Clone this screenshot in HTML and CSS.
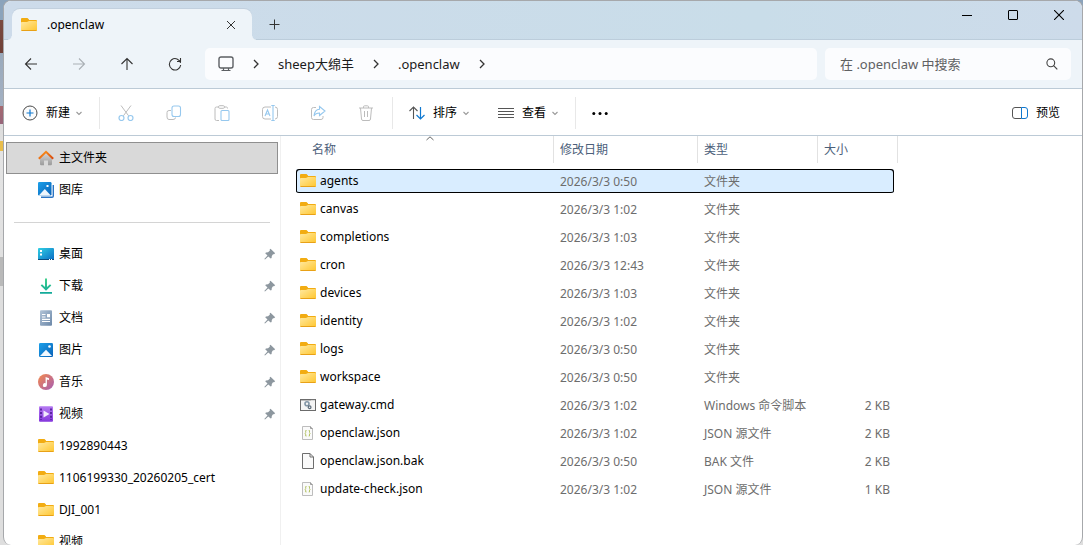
FILE: index.html
```html
<!DOCTYPE html>
<html lang="zh-CN">
<head>
    <meta charset="UTF-8">
    <meta name="viewport" content="width=device-width, initial-scale=1.0">
    <title>.openclaw</title>
    <link rel="stylesheet" href="styles.css">
</head>
<body>
    <!-- shared icons -->
    <svg class="sprite" width="0" height="0">
        <defs>
            <linearGradient id="gFolder" x1="0" y1="0" x2="1" y2="1">
                <stop offset="0" stop-color="#ffe9a0"/>
                <stop offset="1" stop-color="#ffc62e"/>
            </linearGradient>
            <linearGradient id="gHome" x1="0" y1="0" x2="0" y2="1">
                <stop offset="0" stop-color="#d8d8d8"/>
                <stop offset="1" stop-color="#9a9a9a"/>
            </linearGradient>
            <linearGradient id="gRoof" x1="0" y1="0" x2="1" y2="1">
                <stop offset="0" stop-color="#ff9a1c"/>
                <stop offset="1" stop-color="#d8480e"/>
            </linearGradient>
            <linearGradient id="gBlue" x1="0" y1="0" x2="1" y2="1">
                <stop offset="0" stop-color="#1ba0ea"/>
                <stop offset="1" stop-color="#0a62b8"/>
            </linearGradient>
            <linearGradient id="gDesk" x1="0" y1="0" x2="1" y2="1">
                <stop offset="0" stop-color="#30d0e4"/>
                <stop offset="1" stop-color="#0b6cc4"/>
            </linearGradient>
            <linearGradient id="gDoc" x1="0" y1="0" x2="1" y2="1">
                <stop offset="0" stop-color="#b2c4d8"/>
                <stop offset="1" stop-color="#6b87a8"/>
            </linearGradient>
            <linearGradient id="gDown" x1="0" y1="0" x2="0" y2="1">
                <stop offset="0" stop-color="#3fd08c"/>
                <stop offset="1" stop-color="#10a89a"/>
            </linearGradient>
            <linearGradient id="gMusic" x1="0" y1="0" x2="1" y2="1">
                <stop offset="0" stop-color="#f58a4c"/>
                <stop offset="1" stop-color="#a55cb4"/>
            </linearGradient>
            <linearGradient id="gVideo" x1="0" y1="0" x2="0" y2="1">
                <stop offset="0" stop-color="#b57af2"/>
                <stop offset="1" stop-color="#8436dc"/>
            </linearGradient>
        </defs>
        <symbol id="folder" viewBox="0 0 16 16">
            <path d="M0 2Q0 1 1 1H6.5L8 2.5V3H15Q16 3 16 4V8H0Z" fill="#f2ac12"/>
            <path d="M0 5.5Q0 5 1 5H6L8 4H15Q16 4 16 5V13Q16 14 15 14H1Q0 14 0 13Z" fill="url(#gFolder)"/>
            <path d="M0.5 13.5H15.5" stroke="#e8a117" stroke-width="1"/>
        </symbol>
        <symbol id="pin" viewBox="0 0 12 12">
            <path d="M6.5 0.8L11.2 5.2L10 6.2L9 6.2L7.8 8L7.6 10L6.7 10.6L4.3 8.4L1 11.6L0.3 11L3.5 7.6L1.2 5.3L2 4.4L4 4.2L5.8 2.8L5.7 1.6Z" fill="#8d979f"/>
        </symbol>
        <symbol id="down" viewBox="0 0 8 8">
            <path d="M1.5 3L4 5.5L6.5 3" fill="none" stroke="#999" stroke-width="1.1"/>
        </symbol>
        <symbol id="right" viewBox="0 0 8 12">
            <path d="M2 2L6 6L2 10" fill="none" stroke="#333" stroke-width="1.3"/>
        </symbol>
        <symbol id="json" viewBox="0 0 16 16">
            <path d="M2.5 1.5H10.5L12.5 3.5V14.5H2.5Z" fill="#fafafa" stroke="#bdbdbd"/>
            <path d="M10.5 1.5V3.5H12.5" fill="none" stroke="#9a9a9a"/>
            <path d="M6.5 5.5H5.7V7.5L5 8.2L5.7 9V11H6.5M8.7 5.5H9.5V7.5L10.2 8.2L9.5 9V11H8.7" fill="none" stroke="#b5c46a"/>
        </symbol>
        <symbol id="file" viewBox="0 0 16 16">
            <path d="M2.5 0.5H10L13.5 4V15.5H2.5Z" fill="#fafafa" stroke="#6e6e6e"/>
            <path d="M10 0.5V4H13.5" fill="none" stroke="#6e6e6e"/>
        </symbol>
        <symbol id="cmd" viewBox="0 0 16 16">
            <rect x="0.5" y="2.5" width="15" height="11" fill="#f4f4f4" stroke="#6b6b6b"/>
            <path d="M1 3.5H11" stroke="#bbb"/>
            <path d="M11.5 3H15" stroke="#888" stroke-dasharray="1 1"/>
            <circle cx="7" cy="6.8" r="2" fill="none" stroke="#8295a5" stroke-width="1.6"/>
            <circle cx="9.6" cy="10.2" r="1.4" fill="none" stroke="#5b6b79" stroke-width="1.2"/>
        </symbol>
    </svg>

    <div class="window">
        <header class="titlebar">
            <div class="tab">
                <svg class="icon"><use href="#folder"/></svg>
                <span class="tab-title">.openclaw</span>
                <button class="tab-close" aria-label="关闭标签页">
                    <svg width="10" height="10"><path d="M1 1L9 9M9 1L1 9" stroke="#333"/></svg>
                </button>
            </div>
            <button class="tab-add" aria-label="新标签页">
                <svg width="11" height="11"><path d="M5.5 0.5V10.5M0.5 5.5H10.5" stroke="#333"/></svg>
            </button>
            <div class="controls">
                <button aria-label="最小化"><svg width="10" height="10"><path d="M0 5.5H10" stroke="#000"/></svg></button>
                <button aria-label="最大化"><svg width="10" height="10"><rect x="0.5" y="0.5" width="9" height="9" rx="0.5" fill="none" stroke="#000"/></svg></button>
                <button aria-label="关闭"><svg width="10" height="10"><path d="M0 0L10 10M10 0L0 10" stroke="#000" stroke-width="1.1"/></svg></button>
            </div>
        </header>

        <nav class="navbar">
            <div class="nav-buttons">
                <button aria-label="后退"><svg width="14" height="14"><path d="M13 7H1.5M7 1.5L1.5 7L7 12.5" fill="none" stroke="#333" stroke-width="1.1"/></svg></button>
                <button aria-label="前进" disabled><svg width="14" height="14"><path d="M1 7H12.5M7 1.5L12.5 7L7 12.5" fill="none" stroke="#aab0b5" stroke-width="1.1"/></svg></button>
                <button aria-label="上移"><svg width="14" height="14"><path d="M7 13V1.5M1.5 7L7 1.5L12.5 7" fill="none" stroke="#333" stroke-width="1.1"/></svg></button>
                <button aria-label="刷新"><svg width="14" height="14"><path d="M12.6 6A5.7 5.7 0 1 0 12.7 8M12.5 1V4.5H9" fill="none" stroke="#333" stroke-width="1.1"/></svg></button>
            </div>
            <div class="address">
                <svg class="icon monitor" viewBox="0 0 16 16"><rect x="1" y="1" width="14" height="11" rx="2" fill="none" stroke="#5c5f63" stroke-width="1.4"/><path d="M5.5 12V14.5M10.5 12V14.5M3.5 14.5H12.5" fill="none" stroke="#5c5f63" stroke-width="1.2"/></svg>
                <svg class="sep"><use href="#right"/></svg>
                <a href="#">sheep大绵羊</a>
                <svg class="sep"><use href="#right"/></svg>
                <a href="#">.openclaw</a>
                <svg class="sep"><use href="#right"/></svg>
            </div>
            <label class="search">
                <input type="text" placeholder="在 .openclaw 中搜索" aria-label="搜索">
                <svg width="12" height="12"><circle cx="4.8" cy="4.8" r="3.9" fill="none" stroke="#444" stroke-width="1.1"/><path d="M7.6 7.6L11.3 11.3" stroke="#444" stroke-width="1.2"/></svg>
            </label>
        </nav>

        <div class="toolbar">
            <button class="tool new">
                <svg class="icon" viewBox="0 0 16 16"><circle cx="8" cy="8" r="7" fill="#fbfbfb" stroke="#4a4a4a"/><path d="M8 4.5V11.5M4.5 8H11.5" stroke="#0f78d0" stroke-width="1.2"/></svg>
                新建
                <svg class="caret"><use href="#down"/></svg>
            </button>
            <span class="divider"></span>
            <div class="actions">
                <button disabled aria-label="剪切"><svg class="icon" viewBox="0 0 16 16" fill="none"><path d="M3 0.5L10.6 10.8M13 0.5L5.4 10.8" stroke="#bcbcbc"/><circle cx="3.5" cy="13" r="2.5" stroke="#96c8ee" stroke-width="1.2"/><circle cx="12.5" cy="13" r="2.5" stroke="#96c8ee" stroke-width="1.2"/></svg></button>
                <button disabled aria-label="复制"><svg class="icon" viewBox="0 0 16 16" fill="none"><path d="M5 5.5H3Q1 5.5 1 7.5V12Q1 14.5 3 14.5H7Q9.5 14.5 9.5 12.5" stroke="#bcbcbc"/><rect x="6" y="1" width="8.5" height="10.5" rx="2" stroke="#96c8ee" stroke-width="1.1"/></svg></button>
                <button disabled aria-label="粘贴"><svg class="icon" viewBox="0 0 16 16" fill="none"><path d="M5 15.5H2.5Q1 15.5 1 14V3.5Q1 2 2.5 2H4.5M10.5 2H12.5Q13.5 2 13.5 3.5" stroke="#bcbcbc"/><rect x="4.5" y="0.7" width="6" height="2.6" rx="1.2" stroke="#bcbcbc"/><rect x="7" y="5.5" width="8" height="10" rx="1" stroke="#96c8ee" stroke-width="1.1"/></svg></button>
                <button disabled aria-label="重命名"><svg class="icon" viewBox="0 0 16 16" fill="none"><path d="M9 14H3Q0.5 14 0.5 11.5V4.5Q0.5 2 3 2H9M13 2Q15.5 2 15.5 4.5V11.5Q15.5 14 13 14" stroke="#bcbcbc"/><path d="M3 11L5.5 5L8 11M4 9H7M11 0.5V15.5M9.3 0.5H12.7M9.3 15.5H12.7" stroke="#96c8ee" stroke-width="1.1"/></svg></button>
                <button disabled aria-label="共享"><svg class="icon" viewBox="0 0 16 16" fill="none"><path d="M6 2.5H3.5Q1.5 2.5 1.5 4.5V12.5Q1.5 14.5 3.5 14.5H11Q13 14.5 13 12.5V11" stroke="#bcbcbc"/><path d="M9.5 1.5L15 6L9.5 10.5V8Q5.5 8 4 11Q4.5 4.5 9.5 4.2Z" stroke="#96c8ee" stroke-width="1.1"/></svg></button>
                <button disabled aria-label="删除"><svg class="icon" viewBox="0 0 16 16" fill="none"><path d="M1 3H15M5.5 3V1.8Q5.5 0.8 6.5 0.8H9.5Q10.5 0.8 10.5 1.8V3M2.5 3L3.5 14Q3.6 15.5 5 15.5H11Q12.4 15.5 12.5 14L13.5 3M6.5 6V12M9.5 6V12" stroke="#bcbcbc"/></svg></button>
            </div>
            <span class="divider"></span>
            <button class="tool sort">
                <svg class="icon" viewBox="0 0 16 16" fill="none"><path d="M4.5 14V2M0.5 6L4.5 2L8.5 6" stroke="#555" stroke-width="1.1"/><path d="M11.5 2V14M7.5 10L11.5 14L15.5 10" stroke="#0f78d0" stroke-width="1.2"/></svg>
                排序
                <svg class="caret"><use href="#down"/></svg>
            </button>
            <button class="tool view">
                <svg class="icon" viewBox="0 0 16 16"><path d="M0 3.5H16M0 6.5H16M0 9.5H16M0 12.5H16" stroke="#555"/></svg>
                查看
                <svg class="caret"><use href="#down"/></svg>
            </button>
            <span class="divider"></span>
            <button class="tool more" aria-label="更多">
                <svg class="icon" viewBox="0 0 16 16"><circle cx="1.8" cy="8.5" r="1.5"/><circle cx="8" cy="8.5" r="1.5"/><circle cx="14.2" cy="8.5" r="1.5"/></svg>
            </button>
            <button class="tool preview">
                <svg class="icon" viewBox="0 0 16 16" fill="none"><path d="M9.5 2.5H3Q0.5 2.5 0.5 5V11Q0.5 13.5 3 13.5H9.5" stroke="#555"/><path d="M9.5 2.5H13Q15.5 2.5 15.5 5V11Q15.5 13.5 13 13.5H9.5Z" stroke="#0f78d0"/></svg>
                预览
            </button>
        </div>

        <main class="content">
            <aside class="sidebar">
                <a class="place active" href="#"><svg class="icon" viewBox="0 0 16 16"><path d="M8 2.5L14 8V14Q14 15.3 12.8 15.3H10V10.5H6V15.3H3.2Q2 15.3 2 14V8Z" fill="url(#gHome)"/><path d="M0.8 8.7L8 1.8L15.2 8.7" fill="none" stroke="url(#gRoof)" stroke-width="2"/></svg>主文件夹</a>
                <a class="place" href="#"><svg class="icon" viewBox="0 0 16 16"><path d="M3 15.2H14Q15.3 15.2 15.3 14V3" fill="none" stroke="#2a74c4" stroke-width="1.4"/><rect width="13.5" height="13.5" rx="1.2" fill="url(#gBlue)"/><path d="M0.8 13.5L6.8 7L12.8 13.5Z" fill="#eef6fd"/><rect x="8.5" y="3" width="2" height="2" fill="#fff"/></svg>图库</a>
                <hr class="line">
                <a class="place" href="#"><svg class="icon" viewBox="0 0 16 16"><rect y="2" width="16" height="12" rx="1" fill="url(#gDesk)"/><path d="M0 13.5H16" stroke="#0a4d80"/><path d="M2 4H4V6H2ZM2 7.5H4V9.5H2Z" fill="#fff"/><path d="M11 13.5H15" stroke="#fff" stroke-dasharray="1 1"/></svg>桌面<svg class="pin"><use href="#pin"/></svg></a>
                <a class="place" href="#"><svg class="icon" viewBox="0 0 16 16"><path d="M7 0.5H9V9L12 6.2L13.3 7.5L8 12.8L2.7 7.5L4 6.2L7 9ZM2 14H14V15.8H2Z" fill="url(#gDown)"/></svg>下载<svg class="pin"><use href="#pin"/></svg></a>
                <a class="place" href="#"><svg class="icon" viewBox="0 0 16 16"><rect x="2" y="0.3" width="12" height="15.4" rx="1" fill="url(#gDoc)"/><path d="M4 4.5H7.5M4 7H7.5M4 9.3H12M4 11.5H12" stroke="#fff" stroke-width="1.2"/><rect x="9" y="4" width="3" height="3.3" fill="#fff"/></svg>文档<svg class="pin"><use href="#pin"/></svg></a>
                <a class="place" href="#"><svg class="icon" viewBox="0 0 16 16"><rect x="1" y="1" width="14" height="14" rx="1.2" fill="url(#gBlue)"/><path d="M2 14L8 7.8L14 14Z" fill="#f2f8fe"/><circle cx="11.5" cy="4.5" r="1.3" fill="#fff"/></svg>图片<svg class="pin"><use href="#pin"/></svg></a>
                <a class="place" href="#"><svg class="icon" viewBox="0 0 16 16"><circle cx="8" cy="8" r="8" fill="url(#gMusic)"/><path d="M7.6 3L11 4.2V6L8.9 5.4V11A2 2 0 1 1 7.6 9.2Z" fill="#fff"/></svg>音乐<svg class="pin"><use href="#pin"/></svg></a>
                <a class="place" href="#"><svg class="icon" viewBox="0 0 16 16"><rect x="1" y="0.3" width="14" height="15.4" rx="1" fill="url(#gVideo)"/><path d="M3 2.5V14M13 2.5V14" stroke="#4a1a90" stroke-width="1.6" stroke-dasharray="2 1.6"/><path d="M5.5 4.5L11.5 8L5.5 11.5Z" fill="#f2eafc"/></svg>视频<svg class="pin"><use href="#pin"/></svg></a>
                <a class="place" href="#"><svg class="icon"><use href="#folder"/></svg>1992890443</a>
                <a class="place" href="#"><svg class="icon"><use href="#folder"/></svg>1106199330_20260205_cert</a>
                <a class="place" href="#"><svg class="icon"><use href="#folder"/></svg>DJI_001</a>
                <a class="place" href="#"><svg class="icon"><use href="#folder"/></svg>视频</a>
            </aside>

            <section class="files">
                <svg class="sorted" width="8" height="5"><path d="M0.5 4L4 0.8L7.5 4" fill="none" stroke="#666"/></svg>
                <table>
                    <colgroup><col class="col-name"><col class="col-date"><col class="col-type"><col class="col-size"></colgroup>
                    <thead>
                        <tr><th><span>名称</span></th><th><span>修改日期</span></th><th><span>类型</span></th><th><span>大小</span></th></tr>
                    </thead>
                    <tbody>
                        <tr class="selected"><td><svg class="icon"><use href="#folder"/></svg>agents</td><td>2026/3/3 0:50</td><td>文件夹</td><td></td></tr>
                        <tr><td><svg class="icon"><use href="#folder"/></svg>canvas</td><td>2026/3/3 1:02</td><td>文件夹</td><td></td></tr>
                        <tr><td><svg class="icon"><use href="#folder"/></svg>completions</td><td>2026/3/3 1:03</td><td>文件夹</td><td></td></tr>
                        <tr><td><svg class="icon"><use href="#folder"/></svg>cron</td><td>2026/3/3 12:43</td><td>文件夹</td><td></td></tr>
                        <tr><td><svg class="icon"><use href="#folder"/></svg>devices</td><td>2026/3/3 1:03</td><td>文件夹</td><td></td></tr>
                        <tr><td><svg class="icon"><use href="#folder"/></svg>identity</td><td>2026/3/3 1:02</td><td>文件夹</td><td></td></tr>
                        <tr><td><svg class="icon"><use href="#folder"/></svg>logs</td><td>2026/3/3 0:50</td><td>文件夹</td><td></td></tr>
                        <tr><td><svg class="icon"><use href="#folder"/></svg>workspace</td><td>2026/3/3 0:50</td><td>文件夹</td><td></td></tr>
                        <tr><td><svg class="icon"><use href="#cmd"/></svg>gateway.cmd</td><td>2026/3/3 1:02</td><td>Windows 命令脚本</td><td>2 KB</td></tr>
                        <tr><td><svg class="icon"><use href="#json"/></svg>openclaw.json</td><td>2026/3/3 1:02</td><td>JSON 源文件</td><td>2 KB</td></tr>
                        <tr><td><svg class="icon"><use href="#file"/></svg>openclaw.json.bak</td><td>2026/3/3 0:50</td><td>BAK 文件</td><td>2 KB</td></tr>
                        <tr><td><svg class="icon"><use href="#json"/></svg>update-check.json</td><td>2026/3/3 1:02</td><td>JSON 源文件</td><td>1 KB</td></tr>
                    </tbody>
                </table>
            </section>
        </main>
    </div>
</body>
</html>
```
FILE: styles.css
```css
* {
    box-sizing: border-box;
}

body {
    margin: 0;
    height: 100vh;
    overflow: hidden;
    padding-left: 3px;
    font: 12px/16px "Noto Sans", "Noto Sans CJK SC", sans-serif;
    color: #000;
    /* desktop behind the window */
    background: linear-gradient(#8ba3bb 0, #8ba3bb 20px, #7a4a40 20px, #6f4038 53px, #9aaabc 53px, #a3b0c2 106px, #a56a70 106px, #96657a 124px, #dcdcdc 124px, #e0e0e0 141px, #e8bd4c 141px, #e8bd4c 151px, #e4e4e4 151px, #e0e0e0 257px, #b9b9b9 257px, #b9b9b9 286px, #dedede 286px);
}

a {
    color: inherit;
    text-decoration: none;
}

button {
    border: none;
    padding: 0;
    background: none;
    font: inherit;
    color: inherit;
    display: flex;
    align-items: center;
    justify-content: center;
}

svg {
    flex: none;
    display: block;
}

.sprite {
    position: absolute;
}

.icon {
    width: 16px;
    height: 16px;
}

.window {
    height: 100%;
    display: flex;
    flex-direction: column;
    border: 1px solid #a6a8ab;
    border-bottom: none;
    border-radius: 8px;
    background: #fff;
    overflow: hidden;
}

/* title bar */
.titlebar {
    height: 39px;
    flex: none;
    display: flex;
    align-items: flex-end;
    padding-left: 8px;
    background: linear-gradient(90deg, #cddbea, #c9dde9 70%, #cddbea);
    box-shadow: inset 0 -1px #bccddb;
}

.tab {
    position: relative;
    width: 240px;
    height: 31px;
    display: flex;
    align-items: center;
    padding: 0 16px 0 9px;
    background: #eef4f9;
    border-radius: 8px 8px 0 0;
    box-shadow: 0 -1px #c2d0de;
}

.tab::before,
.tab::after {
    content: "";
    position: absolute;
    bottom: 0;
    width: 4px;
    height: 4px;
}

.tab::before {
    left: -4px;
    background: radial-gradient(circle at 0 0, transparent 3px, #eef4f9 4px);
}

.tab::after {
    right: -4px;
    background: radial-gradient(circle at 100% 0, transparent 3px, #eef4f9 4px);
}

.tab-title {
    flex: 1;
    padding-left: 10px;
}

.tab-add {
    width: 44px;
    height: 32px;
}

.controls {
    display: flex;
    margin-left: auto;
    align-self: flex-start;
}

.controls button {
    width: 46px;
    height: 28px;
}

/* navigation */
.navbar {
    height: 49px;
    flex: none;
    display: flex;
    align-items: center;
    gap: 8px;
    padding: 0 11px 0 3px;
    background: #eef4f9;
    border-bottom: 1px solid #bccad6;
    font-size: 13px;
    line-height: 20px;
}

.nav-buttons {
    display: flex;
}

.nav-buttons button {
    width: 48px;
    height: 32px;
}

.address,
.search {
    height: 32px;
    display: flex;
    align-items: center;
    background: #fbfcfe;
    border-radius: 5px;
}

.address {
    flex: 1;
    padding-left: 13px;
    margin-left: -2px;
    color: #1b1b1b;
}

.sep {
    width: 8px;
    height: 12px;
    margin: 0 18px;
}

.search {
    width: 246px;
    padding: 0 13px 0 15px;
}

.search input {
    flex: 1;
    min-width: 0;
    border: none;
    outline: none;
    padding: 0;
    background: none;
    font: inherit;
}

.search input::placeholder {
    color: #5f6163;
}

/* command bar */
.toolbar {
    height: 47px;
    flex: none;
    display: flex;
    align-items: center;
    padding: 2px 22px 0 18px;
    border-bottom: 1px solid #bccad6;
}

.tool {
    height: 32px;
    gap: 8px;
}

.caret {
    width: 8px;
    height: 8px;
    margin-left: -3px;
}

.divider {
    width: 1px;
    height: 32px;
    background: #e8e8e8;
}

.new {
    margin-right: 16px;
}

.actions {
    display: flex;
    padding: 0 2px;
}

.actions button {
    width: 48px;
    height: 32px;
}

.sort {
    margin: 0 28px 0 16px;
}

.view {
    margin-right: 16px;
}

.more {
    margin-left: 16px;
}

.preview {
    margin-left: auto;
}

.content {
    flex: 1;
    min-height: 0;
    display: flex;
}

/* places */
.sidebar {
    width: 277px;
    flex: none;
    padding: 6px 2px 0;
    border-right: 1px solid #f0f0f0;
    overflow: hidden;
}

.place {
    height: 32px;
    display: flex;
    align-items: center;
    padding: 0 1px 0 31px;
    border: 1px solid transparent;
}

.place .icon {
    margin-right: 5px;
}

.place.active {
    background: #d9d9d9;
    border-color: #8f8f8f;
}

.pin {
    width: 12px;
    height: 12px;
    margin-left: auto;
}

.line {
    margin: 16px 8px 15px;
    border: none;
    height: 1px;
    background: #d4d4d4;
}

/* file list */
.files {
    position: relative;
    flex: 1;
    padding-left: 15px;
}

.sorted {
    position: absolute;
    left: 145px;
    top: 0;
}

table {
    width: 598px;
    table-layout: fixed;
    border-spacing: 0;
    color: #6d6d6d;
}

.col-name {
    width: 257px;
}

.col-date {
    width: 144px;
}

.col-type {
    width: 120px;
}

th {
    height: 31px;
    padding: 0;
    vertical-align: top;
    text-align: left;
    font-weight: normal;
    color: #4c607a;
}

th span {
    display: block;
    height: 27px;
    line-height: 27px;
    padding-left: 6px;
    border-left: 1px solid #e2e2e2;
}

th:first-child span {
    padding-left: 16px;
    border-left: none;
}

th:last-child span {
    margin-right: -4px;
    border-right: 1px solid #e2e2e2;
}

td {
    height: 28px;
    padding: 2px 4px 0 7px;
    border: solid transparent;
    border-width: 2px 0;
    background-clip: padding-box;
    white-space: nowrap;
}

td:first-child {
    padding-left: 4px;
    color: #000;
}

td:last-child {
    text-align: right;
}

td .icon {
    display: inline-block;
    vertical-align: middle;
    margin: 0 4px 2px 0;
}

.selected td {
    background-color: #d9edff;
    box-shadow: inset 0 1px #000, inset 0 -1px #000;
}

.selected td:first-child {
    border-radius: 3px 0 0 3px;
    box-shadow: inset 1px 1px #000, inset 0 -1px #000;
}

.selected td:last-child {
    border-radius: 0 3px 3px 0;
    box-shadow: inset -1px 1px #000, inset 0 -1px #000;
}
```
